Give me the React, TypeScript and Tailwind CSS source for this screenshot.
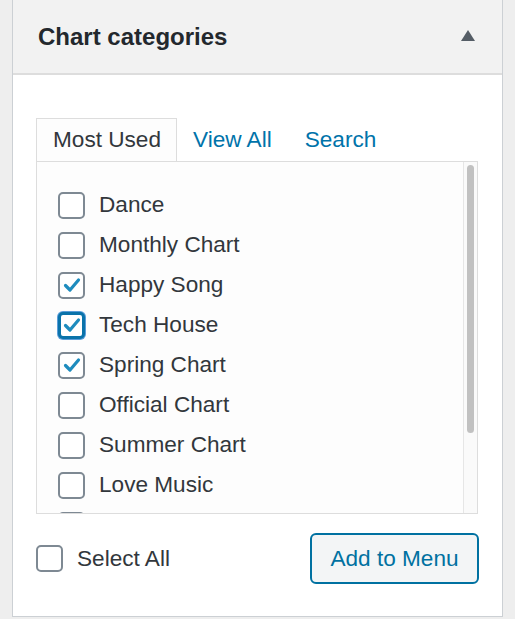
import { useState } from 'react';

const items = [
  { label: 'Dance', checked: false },
  { label: 'Monthly Chart', checked: false },
  { label: 'Happy Song', checked: true },
  { label: 'Tech House', checked: true, focus: true },
  { label: 'Spring Chart', checked: true },
  { label: 'Official Chart', checked: false },
  { label: 'Summer Chart', checked: false },
  { label: 'Love Music', checked: false },
  { label: '', checked: false },
];

function Check({ checked, focus }: { checked?: boolean; focus?: boolean }) {
  return (
    <span
      className={`w-[27px] h-[27px] shrink-0 rounded-[5px] bg-white flex items-center justify-center ${
        focus ? 'border-[3px] border-[#0a73aa] shadow-[0_0_0_1px_#5b9dd9]' : 'border-2 border-[#7e8993]'
      }`}
    >
      {checked && (
        <svg width="20" height="20" viewBox="0 0 20 20">
          <path d="M3.5 10.5 L8 15 L16.5 5" fill="none" stroke="#1e8cbe" strokeWidth="3.2" strokeLinecap="round" strokeLinejoin="round" />
        </svg>
      )}
    </span>
  );
}

export default function App() {
  const [tab] = useState('most');
  return (
    <div
      className="min-h-[619px] bg-[#eeeeee] pl-[12px] pr-[12px] text-[#32373c]"
      style={{ fontFamily: '"Liberation Sans", Arial, sans-serif' }}
    >
      <div className="w-[491px] h-[617px] border-x border-b border-[#ccd0d4] bg-white flex flex-col">
        {/* header */}
        <div className="h-[75px] shrink-0 bg-[#f2f2f2] border-b-2 border-[#dddddd] flex items-center justify-between pl-[25px] pr-[27px]">
          <h2 className="text-[24px] font-bold text-[#23282d]">Chart categories</h2>
          <svg width="14" height="11" viewBox="0 0 14 11" className="-mt-[2px]">
            <path d="M7 0 L14 11 L0 11 Z" fill="#555d66" />
          </svg>
        </div>

        <div className="px-[23px] pt-[44px]">
          {/* tabs */}
          <div className="flex items-end h-[42px] text-[22.6px]">
            <div
              className={`h-[43px] pl-[16px] pr-[15px] border border-b-0 border-[#dddddd] bg-[#fdfdfd] flex items-center relative z-10 ${
                tab === 'most' ? 'text-[#32373c]' : ''
              }`}
            >
              Most Used
            </div>
            <a className="ml-[16px] h-[42px] flex items-center text-[#0073aa]">View All</a>
            <a className="ml-[33px] h-[42px] flex items-center text-[#0073aa]">Search</a>
          </div>

          {/* list box */}
          <div className="w-[442px] h-[353px] border border-[#dddddd] bg-[#fdfdfd] flex overflow-hidden">
            <ul className="flex-1 pl-[21px] pt-[23px] overflow-hidden">
              {items.map((it, i) => (
                <li key={i} className="h-[40px] flex items-center gap-[14px] text-[22.6px]">
                  <Check checked={it.checked} focus={it.focus} />
                  {it.label && <span>{it.label}</span>}
                </li>
              ))}
            </ul>
            <div className="w-[14px] shrink-0 border-l border-[#e6e6e6] bg-[#fafafa] pt-[3px] flex justify-center">
              <div className="w-[7px] h-[268px] rounded-full bg-[#c1c1c1]" />
            </div>
          </div>

          {/* footer */}
          <div className="mt-[19px] flex items-center justify-between">
            <label className="flex items-center gap-[14px] text-[22.6px]">
              <Check />
              <span>Select All</span>
            </label>
            <button className="h-[51px] w-[169px] rounded-[6px] border-2 border-[#0071a1] bg-[#f3f5f6] text-[#0071a1] text-[22.6px]">
              Add to Menu
            </button>
          </div>
        </div>
      </div>
    </div>
  );
}
